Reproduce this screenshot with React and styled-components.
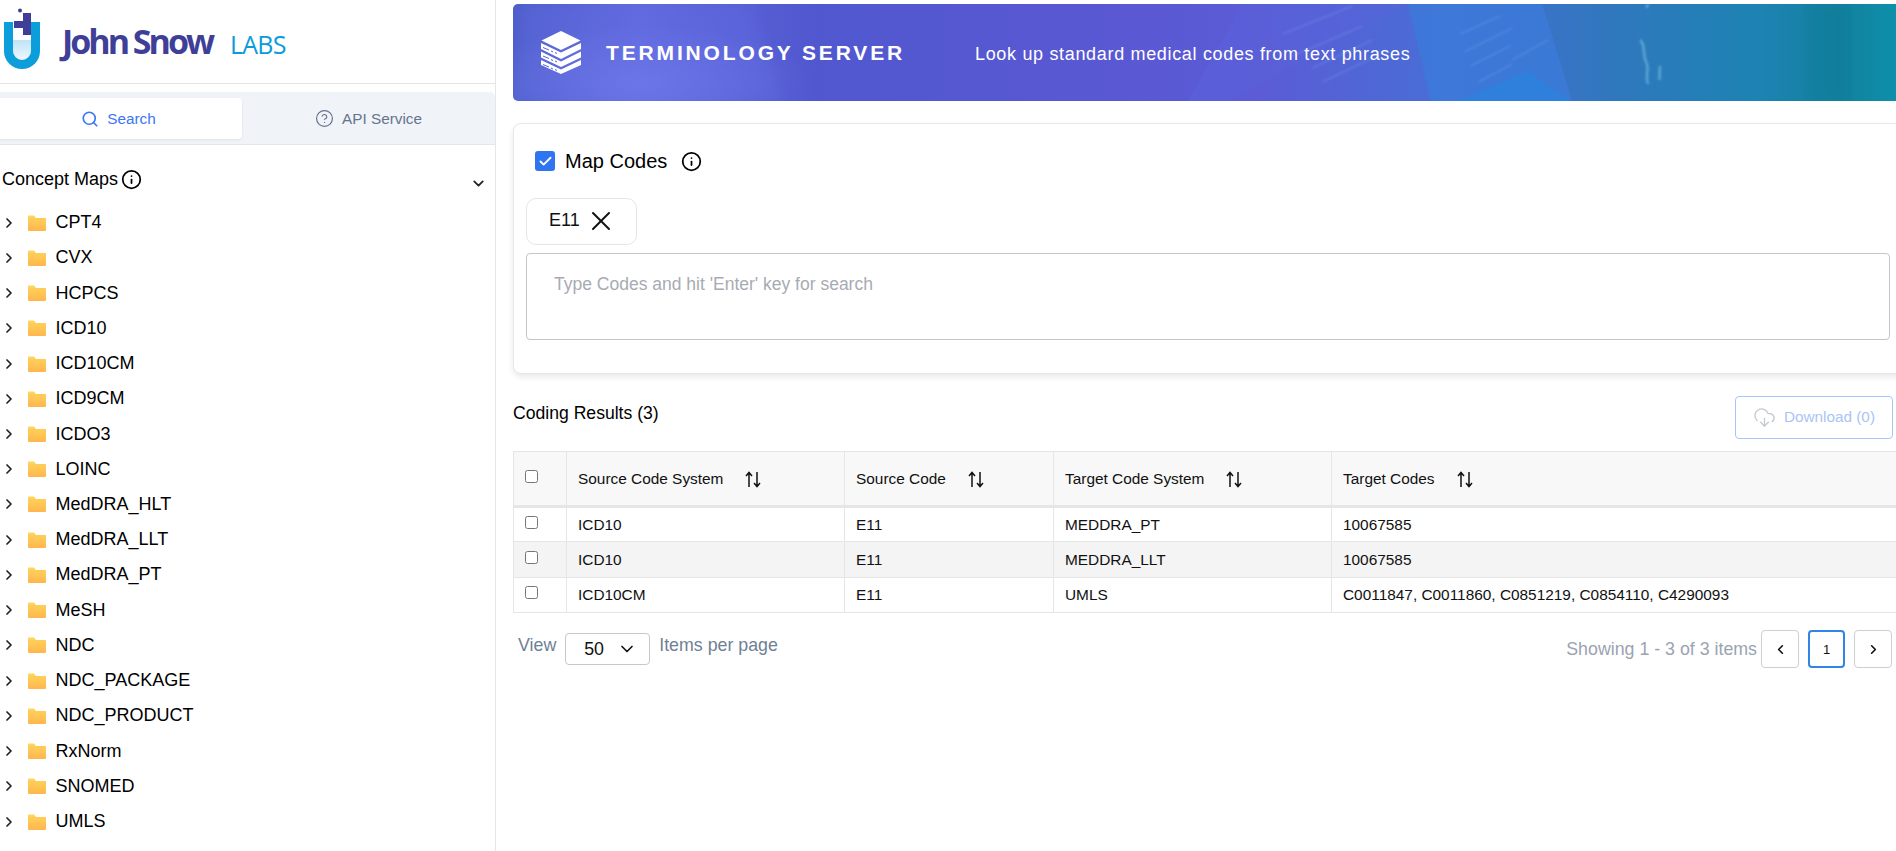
import React from 'react';
import styled, {createGlobalStyle} from 'styled-components';
import {Search, CircleHelp, Info, ChevronRight, ChevronDown, ChevronLeft, X, CloudDownload, Check} from 'lucide-react';

const conceptMaps = ['CPT4', 'CVX', 'HCPCS', 'ICD10', 'ICD10CM', 'ICD9CM', 'ICDO3', 'LOINC', 'MedDRA_HLT', 'MedDRA_LLT', 'MedDRA_PT', 'MeSH', 'NDC', 'NDC_PACKAGE', 'NDC_PRODUCT', 'RxNorm', 'SNOMED', 'UMLS'];

const results = [
    {system: 'ICD10', code: 'E11', target: 'MEDDRA_PT', codes: '10067585'},
    {system: 'ICD10', code: 'E11', target: 'MEDDRA_LLT', codes: '10067585'},
    {system: 'ICD10CM', code: 'E11', target: 'UMLS', codes: 'C0011847, C0011860, C0851219, C0854110, C4290093'},
];

const GlobalStyle = createGlobalStyle`
    html, body {
        margin: 0;
        height: 100%;
        overflow: hidden;
        background: #fff;
        font-family: "Liberation Sans", Arial, sans-serif;
    }
    * { box-sizing: border-box; }
`;

const Page = styled.div`
    display: flex;
    height: 851px;
    width: 1896px;
    overflow: hidden;
`;

/* sidebar */
const Sidebar = styled.aside`
    width: 496px;
    flex-shrink: 0;
    border-right: 1px solid #e6e6e6;
`;
const LogoBar = styled.div`
    height: 84px;
    display: flex;
    align-items: flex-start;
    padding: 8px 0 0 4px;
    border-bottom: 1px solid #e4e4e4;
`;
const LogoText = styled.div`
    margin: 11px 0 0 22px;
    display: flex;
    align-items: baseline;
    gap: 18px;
    white-space: nowrap;
`;
const LogoName = styled.span`
    font-family: "Open Sans", sans-serif;
    font-weight: 700;
    font-size: 34px;
    line-height: 44px;
    letter-spacing: -3px;
    color: #3f3f98;
`;
const LogoLabs = styled.span`
    font-family: "Open Sans", sans-serif;
    font-weight: 400;
    font-size: 25px;
    letter-spacing: -.8px;
    color: #0a9bdc;
`;
const Tabs = styled.div`
    margin-top: 8px;
    height: 53px;
    display: flex;
    padding: 6px 0 5px;
    background: #f0f3f8;
    border-bottom: 1px solid #e4e6ea;
    border-top-right-radius: 5px;
`;
const Tab = styled.div`
    width: ${(p) => (p.$active ? '242px' : '253px')};
    display: flex;
    align-items: center;
    justify-content: center;
    gap: 8px;
    padding-right: ${(p) => (p.$active ? '5px' : '0')};
    font-size: 15.3px;
    color: ${(p) => (p.$active ? '#3b76f6' : '#66758c')};
    background: ${(p) => (p.$active ? '#fff' : 'transparent')};
    border-radius: 0 4px 4px 0;
    box-shadow: ${(p) => (p.$active ? '0 1px 3px rgba(0,0,0,.08)' : 'none')};
`;
const SectionHead = styled.div`
    height: 60px;
    display: flex;
    align-items: center;
    gap: 3px;
    padding: 8px 0 0 2px;
    font-size: 18px;
    color: #000;
`;
const Collapse = styled.span`
    margin-left: auto;
    margin-right: 8px;
    display: flex;
    padding-top: 9px;
`;
const Tree = styled.ul`
    list-style: none;
    margin: 0;
    padding: 0;
`;
const TreeRow = styled.li`
    height: 35.24px;
    display: flex;
    align-items: center;
    padding-left: 1px;
    font-size: 18px;
    color: #000;
`;
const FolderIcon = styled.svg`
    width: 18px;
    height: 16px;
    margin: 0 9.5px 0 11px;
`;

/* main column */
const Main = styled.main`
    flex: 1;
    min-width: 0;
    padding: 4px 0 0 17px;
`;
const Banner = styled.header`
    position: relative;
    height: 97px;
    border-radius: 5px 0 0 5px;
    overflow: hidden;
    display: flex;
    align-items: center;
    padding-left: 28px;
    color: #fff;
    background:
        radial-gradient(ellipse 170px 60px at 130px 80px, rgba(120,130,240,.5), transparent),
        linear-gradient(90deg, #4f5ecb 0%, #5f68dc 9%, #5158cf 22%, #5a58d3 45%, #5b5cd6 54%, #4a6cd6 66%, #2f78bd 80%, #1d83b3 90%, #12809e 96%, #0e90aa 100%);
`;
const BannerArt = styled.svg`
    position: absolute;
    inset: 0;
    width: 100%;
    height: 100%;
`;
const ServerGlyph = styled.svg`
    position: relative;
    flex-shrink: 0;
`;
const BannerTitle = styled.h1`
    position: relative;
    margin: 0 0 0 25px;
    font-size: 21px;
    font-weight: 700;
    letter-spacing: 2.85px;
    white-space: nowrap;
    width: 369px;
`;
const BannerSub = styled.p`
    position: relative;
    margin: 3px 0 0;
    font-size: 18px;
    letter-spacing: .67px;
    white-space: nowrap;
`;
const Card = styled.section`
    margin: 22px -8px 0 0;
    height: 251px;
    padding: 26px 13px 0 12px;
    background: #fff;
    border: 1px solid #e8e8e8;
    border-radius: 8px;
    box-shadow: 0 3px 6px rgba(0,0,0,.09);
`;
const MapRow = styled.div`
    display: flex;
    align-items: center;
    height: 22px;
    padding-left: 9px;
    font-size: 20px;
    color: #000;
`;
const Tick = styled.span`
    width: 20px;
    height: 20px;
    margin-right: 10px;
    display: flex;
    align-items: center;
    justify-content: center;
    border-radius: 3px;
    background: #2f74f0;
`;
const InfoWrap = styled.span`
    display: flex;
    margin-left: ${(p) => p.$gap || 14}px;
`;
const Chip = styled.div`
    margin-top: 26px;
    width: 111px;
    height: 47px;
    display: flex;
    align-items: center;
    padding: 0 0 2px 22px;
    border: 1px solid #e6e6e6;
    border-radius: 10px;
    font-size: 18px;
    color: #111;
`;
const ChipClose = styled.span`
    display: flex;
    margin: 0 -8px 0 5px;
`;
const CodeBox = styled.div`
    margin: 8px 0 0;
    height: 87px;
    padding: 20px 27px;
    border: 1px solid #c4c4c4;
    border-radius: 4px;
    font-size: 17.5px;
    line-height: 20px;
    color: #a7abb3;
`;
const ResultsHead = styled.div`
    height: 56px;
    margin-top: 21px;
    display: flex;
    align-items: flex-start;
    justify-content: space-between;
    padding: 6px 3px 0 0;
`;
const ResultsTitle = styled.h2`
    margin: 0;
    font-size: 17.6px;
    font-weight: 400;
    line-height: 24px;
    color: #000;
`;
const DownloadButton = styled.button`
    width: 158px;
    height: 43px;
    margin-top: -5px;
    display: flex;
    align-items: center;
    justify-content: center;
    gap: 8px;
    padding-bottom: 2px;
    background: #fff;
    border: 1px solid #a9c6f7;
    border-radius: 4px;
    font: inherit;
    font-size: 15.3px;
    color: #a9c4f5;
`;
const Table = styled.table`
    width: 1383px;
    table-layout: fixed;
    border-collapse: collapse;
    font-size: 15.4px;
    color: #111;
`;
const Th = styled.th`
    height: 55px;
    padding: 0 0 0 11px;
    text-align: left;
    font-weight: 400;
    background: #f8f8f8;
    border: 1px solid #e6e6e6;
    border-right-width: ${(p) => (p.$last ? 0 : 1)}px;
    border-bottom: 3px solid #e6e6e6;
`;
const HeadLabel = styled.span`
    display: flex;
    align-items: center;
    gap: 22px;
    padding-top: 1px;
`;
const Td = styled.td`
    height: 35.4px;
    padding: 0 0 0 11px;
    border: 1px solid #e6e6e6;
    border-right-width: ${(p) => (p.$last ? 0 : 1)}px;
    background: ${(p) => (p.$shaded ? '#f4f4f4' : '#fff')};
`;
const RowCheck = styled.input.attrs({type: 'checkbox'})`
    display: block;
    margin: -5px 0 0 0;
    width: 13px;
    height: 13px;
`;
const TableFooter = styled.div`
    display: flex;
    align-items: flex-start;
    justify-content: space-between;
    padding: 17px 4px 0 5px;
    font-size: 17.8px;
`;
const PageSize = styled.div`
    display: flex;
    align-items: flex-start;
    gap: 9px;
    color: #6f7f95;
    line-height: 31px;
`;
const SizeSelect = styled.div`
    width: 85px;
    height: 32px;
    margin-top: 3px;
    display: flex;
    align-items: center;
    gap: 13px;
    padding-left: 18px;
    border: 1px solid #c8c8c8;
    border-radius: 4px;
    color: #111;
`;
const Pager = styled.div`
    display: flex;
    align-items: center;
    gap: 9px;
    color: #9aa3b1;
`;
const PageButton = styled.button`
    width: ${(p) => (p.$active ? '37px' : '38px')};
    height: 38px;
    display: flex;
    align-items: center;
    justify-content: center;
    padding: 0;
    background: #fff;
    border: ${(p) => (p.$active ? '2px solid #2f86e6' : '1px solid #cfcfcf')};
    border-radius: 4px;
    font: inherit;
    font-size: 13px;
    color: #111;
`;
const PagerLabel = styled.span`
    margin-right: -5px;
`;

const Logo = () => (
    <svg width="36" height="62" viewBox="0 0 36 62" aria-hidden="true">
        <defs>
            <linearGradient id="flask" x1="0" y1="0" x2="0" y2="1">
                <stop offset="0" stopColor="#bfe3f7" />
                <stop offset="1" stopColor="#eef8fd" />
            </linearGradient>
        </defs>
        <path d="M9 32h18v11a9 9 0 0 1-18 0z" fill="url(#flask)" />
        <path d="M0 14h9v29a9 9 0 0 0 18 0V14h9v29a18 18 0 0 1-36 0z" fill="#0c9ddb" />
        <circle cx="16" cy="2.500" r="2" fill="#3f3f98" />
        <path d="M19 5h8v22h-8v-7h-9v-7h9z" fill="#3f3f98" />
    </svg>
);

const ServerIcon = () => (
    <ServerGlyph width="40" height="43" viewBox="0 0 40 43" fill="#fff" aria-hidden="true">
        <path d="M20 0l19.500 9.500L20 19 .5 9.500z" />
        <path d="M0 12l20 9.500L40 12v6L20 28 0 18z" />
        <path d="M0 20.500l20 10 20-10v6L20 36 0 26.500z" />
        <path d="M0 29l20 9.500L40 29v5L20 43 0 34z" />
        <g stroke="#5a62d6" strokeWidth="1">
            <path d="M2 16.500l6 2.500M10 20l2 1M14 21.500l2 1" />
            <path d="M2 25l6 2.500M10 28.500l2 1M14 30l2 1" />
            <path d="M2 33.500l6 2.500M10 37l2 1M14 38.500l2 1" />
        </g>
    </ServerGlyph>
);

const SortIcon = () => (
    <svg width="16" height="17" viewBox="0 0 16 17" fill="none" stroke="#111" strokeWidth="1.500" aria-hidden="true">
        <path d="M4 16V1.500M1 5l3-3.500L7 5" />
        <path d="M12 1v14.500M9 12l3 3.500 3-3.500" />
    </svg>
);

const Folder = () => (
    <FolderIcon viewBox="0 0 18 16" aria-hidden="true">
        <defs>
            <linearGradient id="folderFill" x1="0" y1="0" x2="0" y2="1">
                <stop offset="0" stopColor="#ffd65e" />
                <stop offset="1" stopColor="#ffb54d" />
            </linearGradient>
        </defs>
        <path d="M0 1.500A1 1 0 0 1 1 .5h5l2 2.500h9a1 1 0 0 1 1 1V15a1 1 0 0 1-1 1H1a1 1 0 0 1-1-1z" fill="url(#folderFill)" />
        <path d="M0 4h18" stroke="#ffc24f" strokeWidth=".6" />
    </FolderIcon>
);

const BannerBackdrop = () => (
    <BannerArt viewBox="0 0 1384 97" preserveAspectRatio="none" aria-hidden="true">
        <defs>
            <filter id="soft"><feGaussianBlur stdDeviation="1.200" /></filter>
            <filter id="softer"><feGaussianBlur stdDeviation="6" /></filter>
        </defs>
        <path d="M10 0h230l30 97H0z" fill="#6d78ee" opacity=".2" filter="url(#softer)" />
        <path d="M730 0h165l-180 97h-40z" fill="#5b63dc" opacity=".4" />
        <path d="M896 0h134l30 97H918z" fill="#3c7ad9" opacity=".8" />
        <path d="M945 97l70-30 44 30z" fill="#2f7fdc" />
        <g stroke="#7fa6ea" strokeWidth="1.500" opacity=".3" filter="url(#soft)">
            <path d="M948 30l40-18M952 48l48-24M958 62l40-20M966 78l34-18M1000 56l36-20" />
            <path d="M770 30l70-28M780 52l70-30M800 64l60-28M810 78l50-24" />
        </g>
        <g fill="none" stroke="#7cc4ea" strokeWidth="2.500" opacity=".6" filter="url(#soft)">
            <path d="M1128 36c6 6 2 14 6 22s-2 14 2 22" />
            <path d="M1148 62c-1 6 0 10-1 14" />
            <path d="M1134 4l2-4" />
        </g>
        <path d="M1295 0h40v97h-40z" fill="#0b7c94" opacity=".35" filter="url(#softer)" />
    </BannerArt>
);

const App = () => {
    return (
        <Page>
            <GlobalStyle />
            <Sidebar>
                <LogoBar>
                    <Logo />
                    <LogoText>
                        <LogoName>John Snow</LogoName>
                        <LogoLabs>LABS</LogoLabs>
                    </LogoText>
                </LogoBar>
                <Tabs>
                    <Tab $active><Search size={18} strokeWidth={2.2} />Search</Tab>
                    <Tab><CircleHelp size={19} strokeWidth={1.5} />API Service</Tab>
                </Tabs>
                <SectionHead>
                    Concept Maps <Info size={21} strokeWidth={2} />
                    <Collapse><ChevronDown size={17} strokeWidth={2.5} color="#222" /></Collapse>
                </SectionHead>
                <Tree>
                    {conceptMaps.map((name) => (
                        <TreeRow key={name}>
                            <ChevronRight size={16} strokeWidth={2.6} color="#222" />
                            <Folder />
                            {name}
                        </TreeRow>
                    ))}
                </Tree>
            </Sidebar>
            <Main>
                <Banner>
                    <BannerBackdrop />
                    <ServerIcon />
                    <BannerTitle>TERMINOLOGY SERVER</BannerTitle>
                    <BannerSub>Look up standard medical codes from text phrases</BannerSub>
                </Banner>
                <Card>
                    <MapRow>
                        <Tick><Check size={15} strokeWidth={3} color="#fff" /></Tick>
                        Map Codes
                        <InfoWrap><Info size={21} strokeWidth={2} /></InfoWrap>
                    </MapRow>
                    <Chip>E11 <ChipClose><X size={32} strokeWidth={1.5} /></ChipClose></Chip>
                    <CodeBox>Type Codes and hit 'Enter' key for search</CodeBox>
                </Card>
                <ResultsHead>
                    <ResultsTitle>Coding Results (3)</ResultsTitle>
                    <DownloadButton><CloudDownload size={23} strokeWidth={1.4} color="#c4c8cf" />Download (0)</DownloadButton>
                </ResultsHead>
                <Table>
                    <colgroup>
                        <col width="53" />
                        <col width="278" />
                        <col width="209" />
                        <col width="278" />
                        <col />
                    </colgroup>
                    <thead>
                        <tr>
                            <Th><RowCheck readOnly /></Th>
                            {['Source Code System', 'Source Code', 'Target Code System', 'Target Codes'].map((label, i) => (
                                <Th key={label} $last={i === 3}>
                                    <HeadLabel>{label} <SortIcon /></HeadLabel>
                                </Th>
                            ))}
                        </tr>
                    </thead>
                    <tbody>
                        {results.map((row, i) => (
                            <tr key={row.target}>
                                <Td $shaded={i === 1}><RowCheck readOnly /></Td>
                                <Td $shaded={i === 1}>{row.system}</Td>
                                <Td $shaded={i === 1}>{row.code}</Td>
                                <Td $shaded={i === 1}>{row.target}</Td>
                                <Td $shaded={i === 1} $last>{row.codes}</Td>
                            </tr>
                        ))}
                    </tbody>
                </Table>
                <TableFooter>
                    <PageSize>
                        View
                        <SizeSelect>50 <ChevronDown size={20} strokeWidth={2} /></SizeSelect>
                        Items per page
                    </PageSize>
                    <Pager>
                        <PagerLabel>Showing 1 - 3 of 3 items</PagerLabel>
                        <PageButton><ChevronLeft size={15} strokeWidth={2.6} /></PageButton>
                        <PageButton $active>1</PageButton>
                        <PageButton><ChevronRight size={15} strokeWidth={2.6} /></PageButton>
                    </Pager>
                </TableFooter>
            </Main>
        </Page>
    );
};

export default App;
